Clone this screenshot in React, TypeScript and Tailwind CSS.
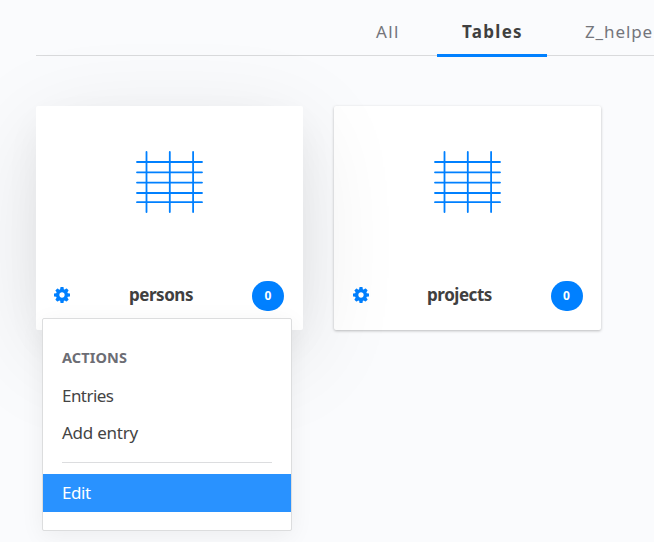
import type { ReactNode } from "react";

function GridIcon() {
  return (
    <svg width="68" height="62" viewBox="0 0 68 62" fill="none" stroke="#0080ff" strokeWidth="1.8" strokeLinecap="round">
      <path d="M1 11H66M1 21.3H66M1 31.6H66M1 42H66M1 51.2H66M10.5 1V61M33.8 1V61M57.1 1V61" />
    </svg>
  );
}

function GearIcon() {
  return (
    <svg width="16" height="16" viewBox="0 0 1536 1536" fill="#0080ff">
      <path d="M1024 768q0-106-75-181t-181-75-181 75-75 181 75 181 181 75 181-75 75-181zm512-109v222q0 12-8 23t-20 13l-185 28q-19 54-39 91 35 50 107 138 10 12 10 25t-9 23q-27 37-99 108t-94 71q-12 0-26-9l-138-108q-44 23-91 38-16 136-29 186-7 28-36 28H657q-14 0-24.500-8.500T621 1506l-28-184q-49-16-90-37l-141 107q-10 9-25 9-14 0-25-11-126-114-165-168-7-10-7-23 0-12 8-23 15-21 51-66.500t54-70.500q-27-50-41-99L29 913q-13-2-21-12.500T0 877V655q0-12 8-23t19-13l186-28q14-46 39-92-40-57-107-138-10-12-10-24 0-10 9-23 26-36 98.500-107.500T337 135q13 0 26 10l138 107q44-23 91-38 16-136 29-186 7-28 36-28h222q14 0 24.500 8.500T915 30l28 184q49 16 90 37l142-107q9-9 24-9 13 0 25 10 129 119 165 170 7 8 7 22 0 12-8 23-15 21-51 66.500t-54 70.500q26 50 41 98l183 28q13 2 21 12.500t8 23.500z" />
    </svg>
  );
}

type CardProps = { title: string; className: string; footerClassName: string; children?: ReactNode };

function Card({ title, className, footerClassName, children }: CardProps) {
  return (
    <div className={`relative h-[224px] w-[267px] rounded-[2px] bg-white ${className}`}>
      <div className="flex justify-center pt-[45px]">
        <GridIcon />
      </div>
      <div className={`mt-[67px] flex h-[31px] items-center justify-between ${footerClassName}`}>
        <div className="pb-[2px]"><GearIcon /></div>
        <span className="pb-[2px] text-[17px] leading-6 font-bold tracking-[-0.45px] text-[#404040]">{title}</span>
        <span className="flex h-[30px] w-8 items-center justify-center rounded-[15px] bg-[#0080ff] text-[12px] font-bold text-white">0</span>
      </div>
      {children}
    </div>
  );
}

function ActionsMenu() {
  return (
    <div className="absolute top-[212px] left-[6px] h-[213px] w-[250px] rounded-[2px] border border-[#dcddde] bg-white pt-[27px] text-[17px] text-[#444] shadow-[0_5px_25px_rgba(0,0,0,0.06)]">
      <div className="h-[23px] px-[19px] text-[14.500px] leading-[22px] font-bold tracking-[0.1px] text-[#6c6d74]">ACTIONS</div>
      <div className="mt-[8px] h-[37px] px-[19px] leading-[37px] tracking-[-0.55px]">Entries</div>
      <div className="h-[37px] px-[19px] leading-[37px] tracking-[-0.25px]">Add entry</div>
      <div className="mx-[19px] mt-[11px] border-t border-[#dcdddf]" />
      <div className="mt-[11px] h-[38px] bg-[#2992ff] px-[19px] leading-[38px] tracking-[-0.4px] text-white">Edit</div>
    </div>
  );
}

export default function App() {
  return (
    <div className="h-[542px] w-[654px] overflow-hidden bg-[#fafbfd] font-['Noto_Sans',sans-serif]">
      <nav className="ml-[36px] flex h-[57px] bg-[linear-gradient(#d9dadc,#d9dadc)] bg-[length:100%_1px] bg-[position:0_55px] bg-no-repeat pl-[315px] text-[17px] leading-[26px] text-[#74757b]">
        <div className="w-[86px] shrink-0 pt-[19px] pl-[25px] tracking-[1.4px]">All</div>
        <div className="w-[110px] shrink-0 border-b-[3px] border-[#0080ff] pt-[19px] pl-[25px] font-bold tracking-[1.300px] text-[#404040]">Tables</div>
        <div className="shrink-0 pt-[19px] pl-[38px] tracking-[0.9px] whitespace-nowrap">Z_helpe</div>
      </nav>
      <main className="mt-[49px] ml-[36px] flex gap-[31px]">
        <Card
          title="persons"
          footerClassName="pl-[18px] pr-[19px]"
          className="z-10 shadow-[0_24px_100px_rgba(0,0,0,0.1),0_14px_38px_-6px_rgba(0,0,0,0.06)]"
        >
          <ActionsMenu />
        </Card>
        <Card title="projects" footerClassName="pl-[18.500px] pr-[18.500px]" className="shadow-[0_1px_3px_rgba(0,0,0,0.26)]" />
      </main>
    </div>
  );
}
